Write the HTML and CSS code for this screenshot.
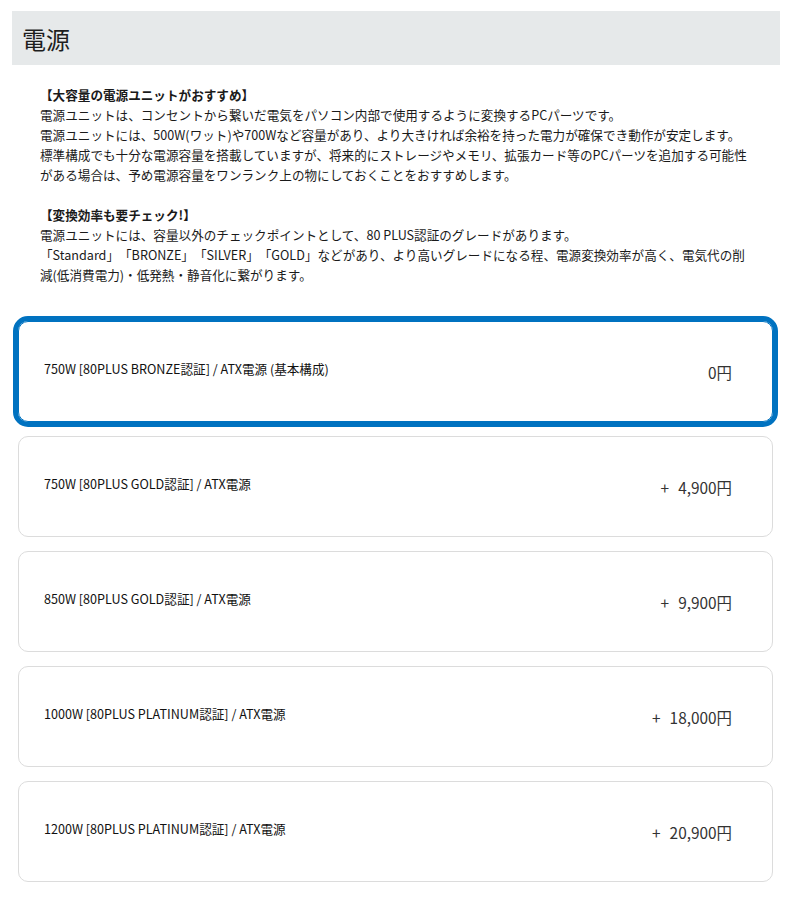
FILE: index.html
```html
<!DOCTYPE html>
<html lang="ja">
<head>
<meta charset="utf-8">
<title>電源</title>
<link rel="stylesheet" href="styles.css">
</head>
<body>
<div class="page">
  <h2 class="title">電源</h2>
  <div class="desc">
    <p><strong>【大容量の電源ユニットがおすすめ】</strong><br>電源ユニットは、コンセントから繋いだ電気をパソコン内部で使用するように変換するPCパーツです。<br>電源ユニットには、500W(ワット)や700Wなど容量があり、より大きければ余裕を持った電力が確保でき動作が安定します。<br>標準構成でも十分な電源容量を搭載していますが、将来的にストレージやメモリ、拡張カード等のPCパーツを追加する可能性がある場合は、予め電源容量をワンランク上の物にしておくことをおすすめします。</p>
    <p><strong>【変換効率も要チェック!】</strong><br>電源ユニットには、容量以外のチェックポイントとして、80 PLUS認証のグレードがあります。<br>「Standard」「BRONZE」「SILVER」「GOLD」などがあり、より高いグレードになる程、電源変換効率が高く、電気代の削減(低消費電力)・低発熱・静音化に繋がります。</p>
  </div>
  <ul class="options">
    <li class="option selected"><span class="label">750W [80PLUS BRONZE認証] / ATX電源 (基本構成)</span><span class="price">0円</span></li>
    <li class="option"><span class="label">750W [80PLUS GOLD認証] / ATX電源</span><span class="price"><span class="plus">+</span>4,900円</span></li>
    <li class="option"><span class="label">850W [80PLUS GOLD認証] / ATX電源</span><span class="price"><span class="plus">+</span>9,900円</span></li>
    <li class="option"><span class="label">1000W [80PLUS PLATINUM認証] / ATX電源</span><span class="price"><span class="plus">+</span>18,000円</span></li>
    <li class="option"><span class="label">1200W [80PLUS PLATINUM認証] / ATX電源</span><span class="price"><span class="plus">+</span>20,900円</span></li>
  </ul>
</div>
</body>
</html>
```

FILE: styles.css
```css
* { box-sizing: border-box; }
html, body { margin: 0; padding: 0; background: #fff; }
body {
  font-family: "Noto Sans CJK JP", "Noto Sans", sans-serif;
  color: #1a1a1a;
  text-spacing-trim: space-all;
}
.page {
  padding: 11px 13px 0 12px;
}
.title {
  margin: 0;
  height: 54px;
  display: flex;
  align-items: center;
  padding-left: 10px;
  background: #e6e9ea;
  font-size: 24px;
  font-weight: 400;
  color: #1e1e1e;
}
.desc {
  padding: 20px 25px 0 28px;
  font-size: 12.6px;
  line-height: 20px;
}
.desc p { margin: 0 0 20px 0; }
.desc p:last-child { margin-bottom: 0; }
.desc strong { font-weight: 700; }
.options {
  list-style: none;
  margin: 36px 0 0 0;
  padding: 0 7px 0 6px;
  display: flex;
  flex-direction: column;
  gap: 14px;
}
.option {
  height: 101px;
  border: 1px solid #dcdcdc;
  border-radius: 10px;
  display: flex;
  align-items: center;
  justify-content: space-between;
  padding: 0 40px 0 25px;
  background: #fff;
}
.option.selected {
  border-color: #0072c0;
  outline: 5px solid #0072c0;
}
.label {
  font-size: 12.6px;
  color: #111;
  margin-bottom: 6px;
}
.price {
  font-size: 15.4px;
  color: #333;
}
.plus { margin-right: 9px; }
```
